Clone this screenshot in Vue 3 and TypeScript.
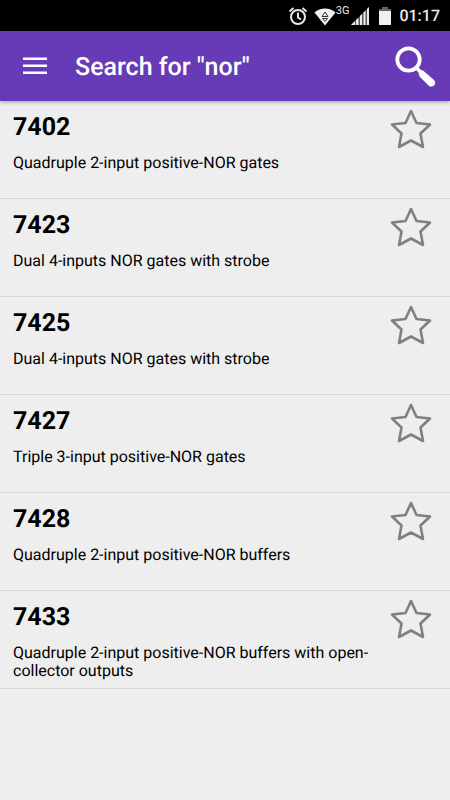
<script setup lang="ts">
import { reactive } from 'vue'

interface Chip {
  code: string
  description: string
  starred: boolean
}

const chips = reactive<Chip[]>([
  { code: '7402', description: 'Quadruple 2-input positive-NOR gates', starred: false },
  { code: '7423', description: 'Dual 4-inputs NOR gates with strobe', starred: false },
  { code: '7425', description: 'Dual 4-inputs NOR gates with strobe', starred: false },
  { code: '7427', description: 'Triple 3-input positive-NOR gates', starred: false },
  { code: '7428', description: 'Quadruple 2-input positive-NOR buffers', starred: false },
  { code: '7433', description: 'Quadruple 2-input positive-NOR buffers with open-collector outputs', starred: false },
])
</script>

<template>
  <div class="screen">
    <div class="status">
      <svg class="alarm" width="20" height="20" viewBox="0 0 20 20" fill="none" stroke="#e6e6e6" stroke-width="2">
        <circle cx="10" cy="11" r="7" />
        <path d="M1.500 5.500 5.500 2M18.500 5.500 14.500 2M10 6.500V11.500L13 13.500" />
      </svg>
      <svg class="wifi" width="22" height="20" viewBox="0 0 22 20">
        <path d="M0.500 6.500C6 1 16 1 21.500 6.500L11 19.500Z" fill="#f0f0f0" />
        <path d="M11 6 14 10.500H8ZM8.500 12.500H13.500L11 15.500Z" fill="none" stroke="#333" stroke-width="1" />
      </svg>
      <span class="network">3G</span>
      <svg class="signal" width="18" height="18" viewBox="0 0 18 18">
        <path d="M0 18 18 0V18Z" fill="#555" />
        <path d="M0 18 4 14V18ZM5 18V13L7.500 10.500V18ZM9 18V9L11 7V18ZM12.500 18V5.500L14.500 3.500V18ZM16 18V2L18 0V18Z" fill="#ececec" />
      </svg>
      <svg class="battery" width="12" height="18" viewBox="0 0 12 18">
        <path d="M3 0H9V2H12V5H0V2H3Z" fill="#666" />
        <path d="M0 4H12V18H0Z" fill="#f0f0f0" />
      </svg>
      <time class="clock">01:17</time>
    </div>

    <header class="bar">
      <button class="icon-button" type="button" aria-label="Menu">
        <svg width="24" height="18" viewBox="0 0 24 18" fill="#fff">
          <path d="M0 0.500H24V3H0ZM0 7.500H24V10H0ZM0 14.500H24V17H0Z" />
        </svg>
      </button>
      <h1 class="title">Search for "nor"</h1>
      <button class="icon-button" type="button" aria-label="Search">
        <svg width="42" height="42" viewBox="0 0 42 42" fill="none" stroke="#fff" stroke-linecap="round">
          <circle cx="14.500" cy="14.500" r="11.200" stroke-width="3.800" />
          <path d="M22.500 23 25.500 26" stroke-width="3.500" />
          <path d="M24.500 26.500Q26 24 29 25.500L40 35Q42 37.500 40.500 40Q38 42.500 35 41L26 32Q24.500 30 24.500 26.500Z" fill="#fff" stroke="none" />
        </svg>
      </button>
    </header>

    <ul class="list">
      <li v-for="chip in chips" :key="chip.code" class="row">
        <div class="text">
          <h2 class="code">{{ chip.code }}</h2>
          <p class="description">{{ chip.description }}</p>
        </div>
        <button
          class="icon-button"
          type="button"
          :aria-label="`Favourite ${chip.code}`"
          :aria-pressed="chip.starred"
          @click="chip.starred = !chip.starred"
        >
          <svg width="42" height="40" viewBox="0 0 42 40" :fill="chip.starred ? '#808080' : 'none'" stroke="#808080" stroke-width="2.600" stroke-linejoin="round">
            <path d="M21 2 26.500 14 40 15.500 30.500 24.500 33 38 21 31.500 9 38 11.500 24.500 2 15.500 15.500 14Z" />
          </svg>
        </button>
      </li>
    </ul>
  </div>
</template>

<style>
body {
  background: #eee;
}
</style>

<style scoped>
.screen {
  min-height: 100vh;
  background: #eee;
  color: #000;
  font-family: Roboto, sans-serif;
  text-rendering: geometricPrecision;
}

.status {
  display: flex;
  align-items: center;
  justify-content: flex-end;
  height: 31px;
  padding-right: 10px;
  background: #000;
  color: #e8e8e8;
}

.wifi {
  margin-left: 6px;
}

.network {
  align-self: flex-start;
  padding-top: 5px;
  font-size: 11px;
  line-height: 12px;
}

.signal {
  margin-left: 2px;
}

.battery {
  margin-left: 10px;
}

.clock {
  margin-left: 8px;
  font-size: 16px;
  font-weight: 500;
  line-height: 20px;
}

.bar {
  position: relative;
  display: flex;
  align-items: center;
  box-sizing: border-box;
  height: 70px;
  padding: 0 14px 0 23px;
  background: #673ab7;
  box-shadow: 0 1px 4px rgba(0, 0, 0, 0.35);
}

.title {
  flex: 1;
  margin: 0;
  padding: 4px 0 0 28px;
  color: #fff;
  font-size: 25px;
  font-weight: 500;
  line-height: 32px;
}

.icon-button {
  display: block;
  flex: none;
  padding: 0;
  border: 0;
  background: none;
  cursor: pointer;
}

.icon-button svg {
  display: block;
}

.list {
  margin: 0;
  padding: 0;
  list-style: none;
}

.row {
  display: flex;
  align-items: flex-start;
  justify-content: space-between;
  gap: 20px;
  box-sizing: border-box;
  min-height: 98px;
  padding: 8px 18px 7px 13px;
  border-bottom: 1px solid #d8d8d8;
}

.text {
  flex: 1;
}

.code {
  margin: 0;
  font-size: 25px;
  font-weight: 700;
  line-height: 38px;
}

.description {
  margin: 7px 0 0;
  font-size: 16px;
  line-height: 18px;
}
</style>
